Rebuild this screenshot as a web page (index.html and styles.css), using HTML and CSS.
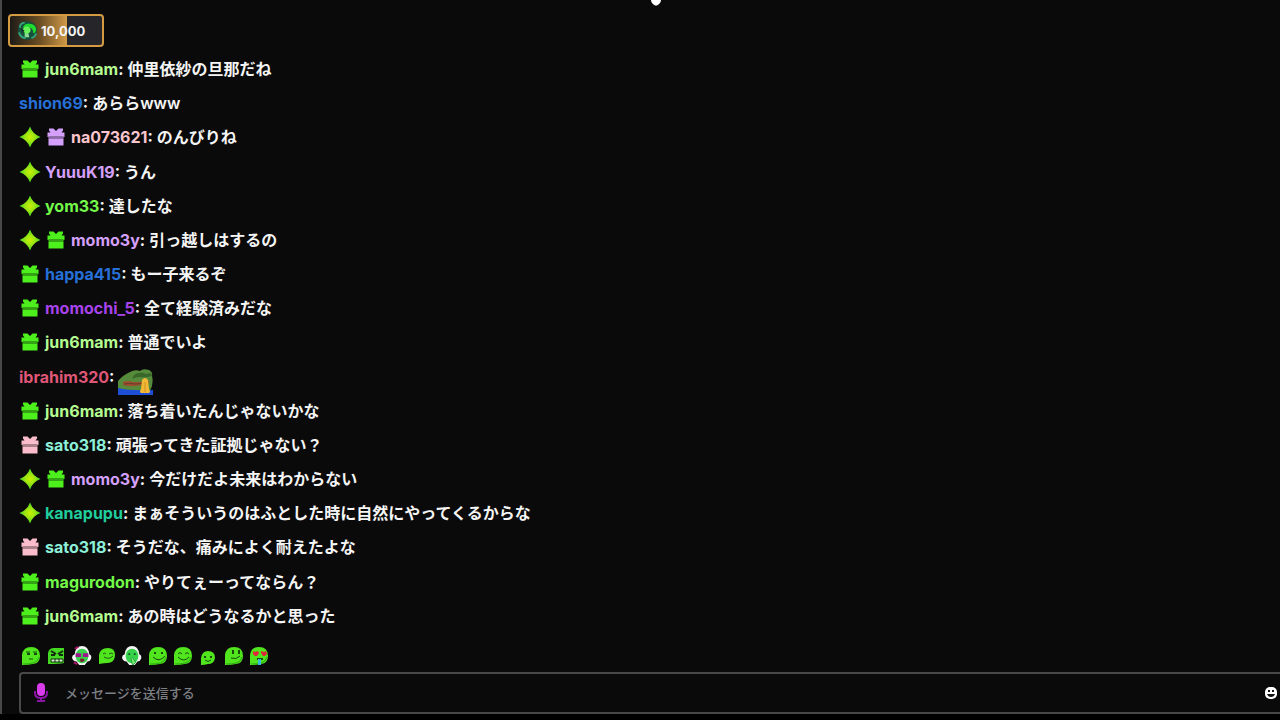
FILE: index.html
```
<!DOCTYPE html>
<html lang="ja">
<head>
    <meta charset="UTF-8">
    <meta name="viewport" content="width=device-width, initial-scale=1.0">
    <title>チャット</title>
    <link rel="stylesheet" href="styles.css">
</head>
<body>
    <svg class="sprite" aria-hidden="true">
        <defs>
            <radialGradient id="starFill">
                <stop offset="0" stop-color="#c8f000"/>
                <stop offset="0.5" stop-color="#98e414"/>
                <stop offset="1" stop-color="#38d820"/>
            </radialGradient>
            <symbol id="star" viewBox="0 0 22 22">
                <path fill="url(#starFill)" d="M11 0.5Q13.500 8 21.500 11Q13.500 14 11 21.500Q8.500 14 0.500 11Q8.500 8 11 0.500Z"/>
            </symbol>
            <symbol id="gift" viewBox="0 0 22 22">
                <path fill="currentColor" d="M4 2.500h4.500l2.500 2.500 2.500-2.500h4.500v2l-1.500 2h3v4.500h-17v-4.500h3l-1.500-2z"/>
                <path fill="currentColor" d="M3.500 11h15v8.500h-15z"/>
                <path fill="#000" opacity="0.32" d="M3.500 10h15v3h-15z"/>
            </symbol>
            <symbol id="blob" viewBox="0 0 20 20">
                <path fill="#50e51d" d="M1 19V9Q2 1 10 1Q19 1 19 10Q19 17 12 18Q7 19 1 19Z"/>
                <path fill="none" stroke="#2fae12" d="M2 18Q8 18 12 17Q17 16 18 11"/>
            </symbol>
            <symbol id="headset" viewBox="0 0 22 22">
                <path fill="#f4f4f4" d="M3 9Q4 0 11 0Q18 0 19 9Q22 10 21 14Q20 17 17 17L14 21H8L5 17Q1 17 0 13Q0 10 3 9Z"/>
                <ellipse cx="11" cy="11" rx="7" ry="8" fill="#36d34b"/>
            </symbol>
        </defs>
    </svg>

    <div class="chat">
        <svg class="top-marker" viewBox="0 0 10 6" aria-hidden="true"><path fill="#fff" d="M0 0H10Q10 3 6 5.500H4Q0 3 0 0Z"/></svg>

        <header class="chat-header">
            <button class="goal" type="button">
                <svg class="goal-icon" viewBox="0 0 22 22" aria-hidden="true">
                    <circle cx="11" cy="11" r="10" fill="#174e3c"/>
                    <path d="M3 8Q3 3 8 3M2 13Q4 19 9 19M15 19Q19 18 20 14" fill="none" stroke="#31a57c" stroke-width="2"/>
                    <path d="M6 8Q8 3 13 4Q20 4 20 11Q19 14 17 14Q17 9 14 8Z" fill="#20dc2d"/>
                    <path d="M7 8Q11 5 14 9Q15 13 12 14V17H8V13Q5 12 7 8Z" fill="#69f35b"/>
                    <path d="M9 14L8 18H13L12 15Z" fill="#8fd69c"/>
                    <path d="M4 9L8 11L6 13Z" fill="#122e2b"/>
                </svg>
                <span>10,000</span>
            </button>
        </header>

        <ul class="messages">
            <li class="message">
                <svg class="badge green"><use href="#gift"/></svg>
                <span class="author"><b class="mint">jun6mam</b>:</span>
                <span class="text">仲里依紗の旦那だね</span>
            </li>
            <li class="message">
                <span class="author"><b class="blue">shion69</b>:</span>
                <span class="text">あららwww</span>
            </li>
            <li class="message">
                <svg class="badge"><use href="#star"/></svg>
                <svg class="badge lilac"><use href="#gift"/></svg>
                <span class="author"><b class="rose">na073621</b>:</span>
                <span class="text">のんびりね</span>
            </li>
            <li class="message">
                <svg class="badge"><use href="#star"/></svg>
                <span class="author"><b class="lilac">YuuuK19</b>:</span>
                <span class="text">うん</span>
            </li>
            <li class="message">
                <svg class="badge"><use href="#star"/></svg>
                <span class="author"><b class="lime">yom33</b>:</span>
                <span class="text">達したな</span>
            </li>
            <li class="message">
                <svg class="badge"><use href="#star"/></svg>
                <svg class="badge green"><use href="#gift"/></svg>
                <span class="author"><b class="lilac">momo3y</b>:</span>
                <span class="text">引っ越しはするの</span>
            </li>
            <li class="message">
                <svg class="badge green"><use href="#gift"/></svg>
                <span class="author"><b class="blue">happa415</b>:</span>
                <span class="text">もー子来るぞ</span>
            </li>
            <li class="message">
                <svg class="badge green"><use href="#gift"/></svg>
                <span class="author"><b class="purple">momochi_5</b>:</span>
                <span class="text">全て経験済みだな</span>
            </li>
            <li class="message">
                <svg class="badge green"><use href="#gift"/></svg>
                <span class="author"><b class="mint">jun6mam</b>:</span>
                <span class="text">普通でいよ</span>
            </li>
            <li class="message">
                <span class="author"><b class="red">ibrahim320</b>:</span>
                <svg class="message-emote" viewBox="0 0 35 28" role="img" aria-label="pray">
                    <path fill="#568b3b" d="M0 24V13Q5 7 12 4Q17 1 22 3Q25 0 31 2Q35 4 34 8Q36 15 32 23Z"/>
                    <path fill="#1f4ed6" d="M0 20Q12 23 35 22V27H0Z"/>
                    <path fill="#386729" d="M16 7Q22 3 28 6L33 5L34 8Q27 10 21 9Q17 9 14 11Z"/>
                    <path fill="#9c5030" d="M5 14Q9 12 15 14Q21 14 31 13V15Q24 18 17 18Q11 19 5 17Z"/>
                    <path fill="none" stroke="#633b25" d="M6 16Q12 15 17 16Q22 16 26 15"/>
                    <path fill="#f3b936" d="M24 12Q27 8 30 12L31 21Q33 24 31 25H23Q21 24 23 21Z"/>
                    <path fill="none" stroke="#cf9027" d="M27 14V24"/>
                </svg>
            </li>
            <li class="message">
                <svg class="badge green"><use href="#gift"/></svg>
                <span class="author"><b class="mint">jun6mam</b>:</span>
                <span class="text">落ち着いたんじゃないかな</span>
            </li>
            <li class="message">
                <svg class="badge pink"><use href="#gift"/></svg>
                <span class="author"><b class="aqua">sato318</b>:</span>
                <span class="text">頑張ってきた証拠じゃない？</span>
            </li>
            <li class="message">
                <svg class="badge"><use href="#star"/></svg>
                <svg class="badge green"><use href="#gift"/></svg>
                <span class="author"><b class="lilac">momo3y</b>:</span>
                <span class="text">今だけだよ未来はわからない</span>
            </li>
            <li class="message">
                <svg class="badge"><use href="#star"/></svg>
                <span class="author"><b class="teal">kanapupu</b>:</span>
                <span class="text">まぁそういうのはふとした時に自然にやってくるからな</span>
            </li>
            <li class="message">
                <svg class="badge pink"><use href="#gift"/></svg>
                <span class="author"><b class="aqua">sato318</b>:</span>
                <span class="text">そうだな、痛みによく耐えたよな</span>
            </li>
            <li class="message">
                <svg class="badge green"><use href="#gift"/></svg>
                <span class="author"><b class="lime">magurodon</b>:</span>
                <span class="text">やりてぇーってならん？</span>
            </li>
            <li class="message">
                <svg class="badge green"><use href="#gift"/></svg>
                <span class="author"><b class="mint">jun6mam</b>:</span>
                <span class="text">あの時はどうなるかと思った</span>
            </li>
        </ul>

        <div class="emotes">
            <button class="emote" type="button" aria-label="emote 1">
                <svg viewBox="0 0 20 20"><use href="#blob"/><path d="M5 6H9M12 6H16M8 13H12" stroke="#174b0c" stroke-width="1"/><path d="M6 7H9V9H6ZM13 7H16V9H13Z" fill="#174b0c"/></svg>
            </button>
            <button class="emote" type="button" aria-label="emote 2">
                <svg viewBox="0 0 20 20"><path d="M2 18V7Q3 2 8 2H18V17Q14 18 2 18Z" fill="#45d923"/><path d="M5 5L10 8M17 5L12 8M5 9H9M13 9H17" stroke="#102c0b" stroke-width="2"/><path d="M5 13H17V16H5Z" fill="#d7f5d0" stroke="#102c0b"/><path d="M9 13V16M13 13V16" stroke="#102c0b"/></svg>
            </button>
            <button class="emote" type="button" aria-label="emote 3">
                <svg viewBox="0 0 22 22"><use href="#headset"/><path d="M3 3L7 1M2 18L6 20" stroke="#a91663" stroke-width="2"/><path d="M4 8H10V12H4ZM12 8H18V12H12Z" fill="#9b168c"/><path d="M9 14Q14 13 14 16L11 18Q8 17 9 14Z" fill="#7b2033"/></svg>
            </button>
            <button class="emote" type="button" aria-label="emote 4">
                <svg viewBox="0 0 20 20"><path d="M2 18V9Q3 2 11 2Q18 2 18 9Q18 16 11 17Q7 17 2 18Z" fill="#50e51d"/><path d="M6 8Q8 6 9 8M12 8Q14 6 16 8M7 11Q12 14 16 10" fill="none" stroke="#195a0d"/></svg>
            </button>
            <button class="emote" type="button" aria-label="emote 5">
                <svg viewBox="0 0 22 22"><use href="#headset"/><path d="M7 8H9V10H7ZM13 8H15V10H13Z" fill="#124e20"/><path d="M11 19L10 14Q12 11 13 15L15 18L12 21Z" fill="#72ef74" stroke="#219634"/></svg>
            </button>
            <button class="emote" type="button" aria-label="emote 6">
                <svg viewBox="0 0 20 20"><use href="#blob"/><path d="M6 6H8V8H6ZM13 6H15V8H13Z" fill="#174b0c"/><path d="M5 11Q11 17 17 10" fill="none" stroke="#174b0c"/></svg>
            </button>
            <button class="emote" type="button" aria-label="emote 7">
                <svg viewBox="0 0 20 20"><use href="#blob"/><path d="M5 8Q7 5 9 8M12 8Q14 5 16 8M5 11Q11 17 16 11" fill="none" stroke="#174b0c"/></svg>
            </button>
            <button class="emote" type="button" aria-label="emote 8">
                <svg viewBox="0 0 20 20"><path d="M3 19V12Q4 5 10 5Q17 5 17 12Q16 18 10 18Q7 19 3 19Z" fill="#50e51d"/><path d="M6 10H8V12H6ZM12 10H14V12H12Z" fill="#174b0c"/><path d="M7 14Q10 17 13 14" fill="none" stroke="#174b0c"/></svg>
            </button>
            <button class="emote" type="button" aria-label="emote 9">
                <svg viewBox="0 0 20 20"><use href="#blob"/><path d="M8 4H10V8H8ZM14 4H16V8H14Z" fill="#174b0c"/><path d="M7 12Q12 14 16 10" fill="none" stroke="#174b0c"/></svg>
            </button>
            <button class="emote" type="button" aria-label="emote 10">
                <svg viewBox="0 0 20 20"><use href="#blob"/><path d="M4 5L6 6L9 5L10 7L8 10H6L4 8ZM12 5L15 6L17 5L18 8L16 10H14L12 7Z" fill="#df2537"/><path d="M8 12H14V14H8Z" fill="#174b0c"/><path d="M9 13H12V19H9Z" fill="#39b9df"/></svg>
            </button>
        </div>

        <form class="composer">
            <button class="icon-btn" type="button" aria-label="音声">
                <svg width="14" height="20" viewBox="0 0 14 20">
                    <path d="M1 8V10Q1 15 7 15Q13 15 13 10V8M7 15V18M3 18H11" fill="none" stroke="#8b13a5" stroke-width="2"/>
                    <rect x="3" y="0" width="8" height="13" rx="4" fill="#d83bea"/>
                </svg>
            </button>
            <input class="composer-input" type="text" aria-label="メッセージ" placeholder="メッセージを送信する">
            <button class="icon-btn" type="button" aria-label="絵文字">
                <svg width="12" height="12" viewBox="0 0 12 12">
                    <rect width="12" height="12" rx="5" fill="#fff"/>
                    <path d="M3 3H5V5H3ZM7 3H9V5H7ZM2 7H10Q9 10 6 10Q3 10 2 7Z" fill="#111"/>
                </svg>
            </button>
        </form>
    </div>
</body>
</html>
```
FILE: styles.css
```
:root {
    --bg: #0a0a0a;
    --border: #48484a;
    --gold: #d49b43;
    --text: #f5f5f5;
}

* {
    margin: 0;
    padding: 0;
    box-sizing: border-box;
    font-family: Inter, "Noto Sans CJK JP", sans-serif;
}

body {
    background-color: #000;
    color: var(--text);
    min-height: 100vh;
    padding-bottom: 6px;
    display: flex;
}

button {
    background: none;
    border: none;
    color: inherit;
    cursor: pointer;
}

svg {
    display: block;
}

.sprite {
    position: absolute;
    width: 0;
    height: 0;
}

.chat {
    position: relative;
    flex: 1;
    display: flex;
    flex-direction: column;
    background-color: var(--bg);
    border-left: 2px solid var(--border);
}

.top-marker {
    position: absolute;
    top: 0;
    left: calc(50% + 10px);
    width: 10px;
    height: 6px;
}

.chat-header {
    display: flex;
    padding: 14px 6px 5px;
}

.goal {
    display: flex;
    align-items: center;
    gap: 3px;
    width: 96px;
    height: 33px;
    padding: 0 7px;
    border: 2px solid var(--gold);
    border-radius: 4px;
    background: linear-gradient(90deg, #1e1b17, #6a4d24 32%, #d09a48 62%, #26262a 62%);
    font-size: 13px;
    font-weight: 700;
}

.goal-icon {
    width: 21px;
    height: 21px;
}

.messages {
    flex: 1;
    display: flex;
    flex-direction: column;
    list-style: none;
    padding: 0 17px;
}

.message {
    flex: 1 0 0;
    display: flex;
    align-items: center;
    gap: 4px;
    font-size: 16px;
    line-height: 24px;
}

.badge {
    width: 22px;
    height: 22px;
}

.author,
.author b {
    font-weight: 700;
}

.text {
    font-weight: 600;
}

.message-emote {
    align-self: flex-end;
    width: 35px;
    height: 28px;
    margin-bottom: -2px;
}

.green { color: #4df01c; }
.mint { color: #b5fc91; }
.blue { color: #2670d8; }
.lilac { color: #d5a0fc; }
.rose { color: #fbc5cd; }
.lime { color: #74fa48; }
.purple { color: #a843ec; }
.red { color: #df5676; }
.pink { color: #fbbdcb; }
.aqua { color: #8df0d8; }
.teal { color: #20cd9c; }

.emotes {
    display: flex;
    justify-content: space-between;
    width: 248px;
    margin: 13px 19px 6px;
}

.emote svg {
    width: 20px;
    height: 20px;
}

.composer {
    display: flex;
    align-items: center;
    height: 42px;
    margin-left: 17px;
    padding: 0 3px 0 13px;
    border: 2px solid var(--border);
    border-right: none;
    border-radius: 4px 0 0 4px;
}

.composer-input {
    flex: 1;
    min-width: 0;
    margin: 0 17px;
    border: none;
    outline: none;
    background: none;
    color: var(--text);
    font-size: 13px;
    font-weight: 500;
}

.composer-input::placeholder {
    color: #7c7f84;
}
```
